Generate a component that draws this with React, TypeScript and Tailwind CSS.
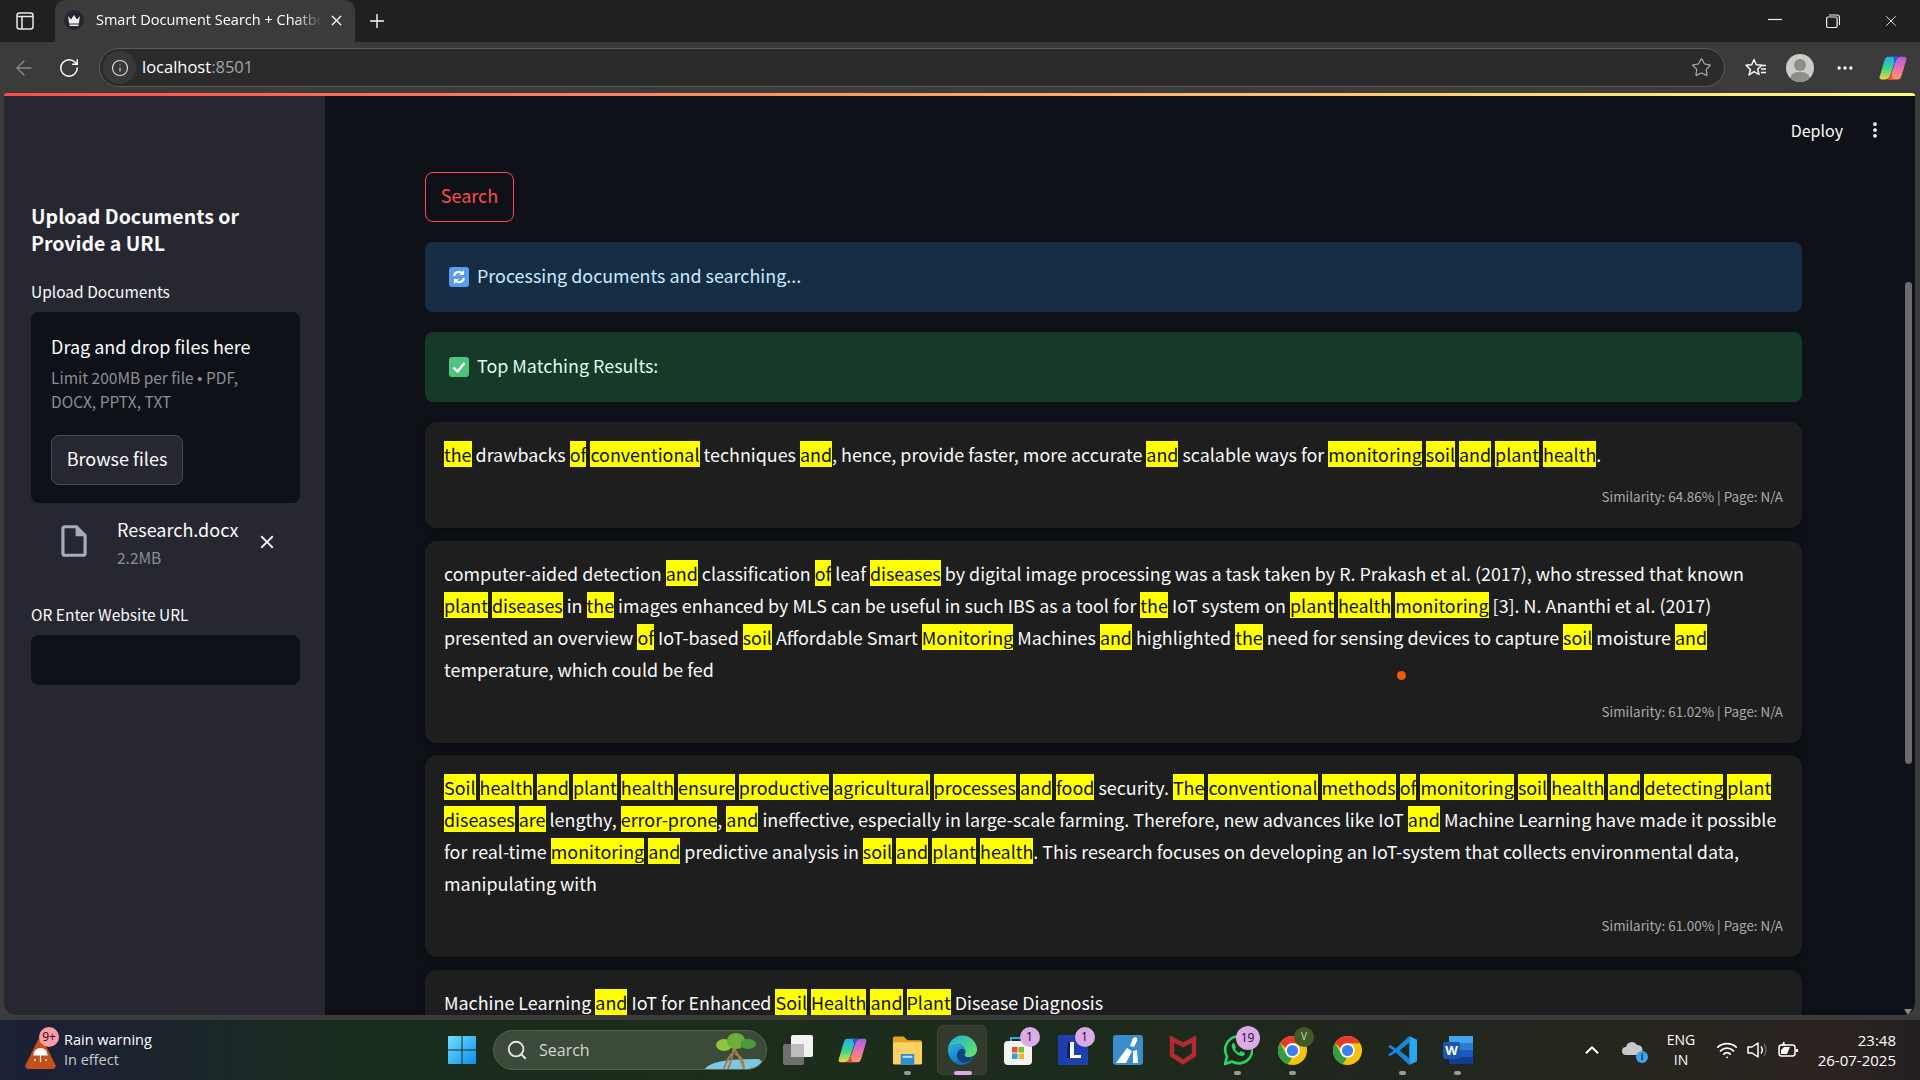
import { ReactNode } from "react";
import {
	ArrowLeft,
	ChevronUp,
	Info,
	MoreHorizontal,
	MoreVertical,
	Plus,
	RotateCw,
	Search,
	Star,
	Wifi,
	X,
} from "lucide-react";
import { MdClose, MdOutlineInsertDriveFile } from "react-icons/md";

const stFont = "font-['Noto_Sans_CJK_SC','Noto_Sans',sans-serif]";
const winFont = "font-['Open_Sans','Noto_Sans',sans-serif]";

// *word* gets the yellow highlight
function Marked({ text }: { text: string }) {
	const parts = text.split(/(\*[^*]+\*)/g);
	return (
		<div className="h-[32px] whitespace-nowrap leading-[32px]">
			{parts.map((p, i) =>
				p.startsWith("*") ? (
					<mark key={i} className="bg-[#ffff00] text-[#111]">
						{p.slice(1, -1)}
					</mark>
				) : (
					<span key={i}>{p}</span>
				),
			)}
		</div>
	);
}

function ResultCard({ lines, meta }: { lines: string[]; meta?: string }) {
	return (
		<div className="min-h-[100px] rounded-xl bg-[#1e1e1e] px-[19px] pt-[16px] pb-[21px] text-[17.9px] text-[#fafafa] shadow-[0_2px_8px_rgba(0,0,0,0.4)]">
			{lines.map((l, i) => (
				<Marked key={i} text={l} />
			))}
			{meta && <div className="mt-[15px] h-[22px] text-right text-[13.4px] leading-[22px] text-[#aaaaaa]">{meta}</div>}
		</div>
	);
}

function Alert({ className, icon, children }: { className: string; icon: ReactNode; children: ReactNode }) {
	return (
		<div className={`flex h-[70px] items-center gap-[8px] rounded-lg pl-[24px] text-[17.9px] ${className}`}>
			{icon}
			<span className="pb-[3px]">{children}</span>
		</div>
	);
}

function Copilot({ size }: { size: number }) {
	return (
		<svg width={size} height={size} viewBox="0 0 32 32">
			<defs>
				<linearGradient id="cpl" x1="0" y1="0" x2="0" y2="1">
					<stop offset="0" stopColor="#25a9f2" />
					<stop offset="0.5" stopColor="#35d68a" />
					<stop offset="1" stopColor="#f4d83a" />
				</linearGradient>
				<linearGradient id="cpr" x1="0" y1="0" x2="0" y2="1">
					<stop offset="0" stopColor="#a45ee5" />
					<stop offset="0.55" stopColor="#ef70b0" />
					<stop offset="1" stopColor="#fb9a5a" />
				</linearGradient>
			</defs>
			<path d="M22 29H10c2-1 3-3 4-6l5-15c1-3 3-5 6-5h4c2 0 3 2 2 4L26 24c-1 3-2 5-4 5z" fill="url(#cpr)" />
			<path d="M10 3h12c-2 1-3 3-4 6l-5 15c-1 3-3 5-6 5H3c-2 0-3-2-2-4L6 8c1-3 2-5 4-5z" fill="url(#cpl)" />
			<path d="M16 3h7c-2 1-3 2-4 5l-1 3c-1-3-1-6-2-8z" fill="#1c5fd8" />
			<path d="M16 29H9c2-1 3-2 4-5l1-3c1 3 1 6 2 8z" fill="#e8503a" />
		</svg>
	);
}

function Edge() {
	return (
		<svg width="31" height="31" viewBox="0 0 32 32">
			<defs>
				<linearGradient id="ed1" x1="0" y1="0" x2="1" y2="0.6">
					<stop offset="0" stopColor="#1fa8e0" />
					<stop offset="1" stopColor="#5be070" />
				</linearGradient>
				<linearGradient id="ed2" x1="0" y1="0" x2="0.8" y2="1">
					<stop offset="0" stopColor="#25b4ea" />
					<stop offset="1" stopColor="#0b5fb0" />
				</linearGradient>
			</defs>
			<path d="M1 16A15 15 0 0 1 31 15c0 5-4 8-8 8-3 0-5-1-5-3 0-1 1-1 1-3 0-4-4-8-9-7-5 0-8 3-9 6z" fill="url(#ed1)" />
			<path d="M1 16c1-3 4-6 9-6 5-1 9 3 9 7 0 2-1 2-1 3 0 2 2 3 5 3 2 0 4-1 5-2-2 6-7 10-13 10C8 31 1 24 1 16z" fill="url(#ed2)" />
			<path d="M15 28c-5-2-6-8-3-12 2-2 5-3 7 1 0 2-1 2-1 3 0 2 2 3 5 3 2 0 4-1 5-2-3 5-8 9-13 7z" fill="#12427a" />
		</svg>
	);
}

function Chrome() {
	return (
		<svg width="31" height="31" viewBox="0 0 32 32">
			<circle cx="16" cy="16" r="15" fill="#f4c20d" />
			<path d="M16 1a15 15 0 0 1 13 7.500H16a7.500 7.500 0 0 0-7 5L3.200 8.300A15 15 0 0 1 16 1z" fill="#e33b2e" />
			<path d="M3.200 8.300 9.600 20a7.500 7.500 0 0 0 6 3.500L11 30.200A15 15 0 0 1 3.200 8.300z" fill="#2f9e44" />
			<circle cx="16" cy="16" r="7.500" fill="#fff" />
			<circle cx="16" cy="16" r="5.800" fill="#3f7fe8" />
		</svg>
	);
}

function Badge({ children, className = "" }: { children: ReactNode; className?: string }) {
	return (
		<span
			className={`absolute top-[-8px] right-[-7px] flex h-[20px] min-w-[20px] items-center justify-center rounded-full bg-[#dcaae6] text-[12px] text-[#111] ${className}`}
		>
			{children}
		</span>
	);
}

function TaskIcon({ children, dot, active }: { children: ReactNode; dot?: boolean; active?: boolean }) {
	return (
		<div className="relative flex h-[60px] w-[55px] items-center justify-center">
			{active && <div className="absolute top-[5px] left-[2px] h-[50px] w-[50px] rounded-md border border-[#3d4436] bg-[#333a2d]" />}
			<div className="relative flex items-center justify-center">{children}</div>
			{dot && (
				<div
					className={`absolute top-[51px] h-[4px] rounded-full ${active ? "w-[18px] bg-[#dcaae6]" : "w-[7px] bg-[#9a9a9a]"}`}
				/>
			)}
		</div>
	);
}

const taskApps: { node: ReactNode; dot?: boolean; active?: boolean }[] = [
	{
		node: (
			<svg width="32" height="32" viewBox="0 0 32 32">
				<rect x="1" y="10" width="21" height="21" rx="2" fill="#6f6f6f" />
				<rect x="9" y="1" width="22" height="22" rx="2" fill="#f2f2f2" />
				<rect x="9" y="10" width="13" height="13" fill="#bdbdbd" />
			</svg>
		),
	},
	{ node: <Copilot size={29} /> },
	{
		node: (
			<svg width="31" height="30" viewBox="0 0 32 30">
				<path d="M1 3a2 2 0 0 1 2-2h9l4 4h13a2 2 0 0 1 2 2v4H1z" fill="#e0a520" />
				<rect x="1" y="7" width="30" height="23" rx="1.500" fill="#fbd262" />
				<rect x="9" y="19" width="14" height="11" rx="1" fill="#2b8fd6" />
				<rect x="11" y="21" width="10" height="2" fill="#bfe3f7" />
			</svg>
		),
		dot: true,
	},
	{ node: <Edge />, dot: true, active: true },
	{
		node: (
			<>
				<svg width="30" height="30" viewBox="0 0 30 30">
					<path d="M8 7V3h13v4" fill="none" stroke="#34a7e0" strokeWidth="2" />
					<rect x="1" y="6" width="28" height="24" rx="4" fill="#f2f2f2" />
					<rect x="9" y="12" width="5.500" height="5.500" fill="#e8512f" />
					<rect x="15.500" y="12" width="5.500" height="5.500" fill="#7db82d" />
					<rect x="9" y="18.500" width="5.500" height="5.500" fill="#2b9fe0" />
					<rect x="15.500" y="18.500" width="5.500" height="5.500" fill="#f6b71a" />
				</svg>
				<Badge>1</Badge>
			</>
		),
	},
	{
		node: (
			<>
				<svg width="30" height="30" viewBox="0 0 30 30">
					<rect width="30" height="30" fill="#1e3fae" />
					<path d="M10 7h2l2 13H22v3H9z" fill="#0d1f55" />
					<path d="M12 7h4v13h7v3H12z" fill="#fff" />
				</svg>
				<Badge>1</Badge>
			</>
		),
	},
	{
		node: (
			<svg width="30" height="30" viewBox="0 0 30 30">
				<rect width="30" height="30" rx="3" fill="#3a8ccb" />
				<path d="M3 28 14 13l5 3-6 12zM17 11l3-8c3-2 5 0 4 3l-3 6zM20 16l4-1 1 13h-5z" fill="#fff" />
			</svg>
		),
	},
	{
		node: (
			<svg width="28" height="32" viewBox="0 0 28 32">
				<path d="M3 5l11 6 11-6v16l-11 7-11-7z" fill="none" stroke="#b52a2e" strokeWidth="4.500" />
			</svg>
		),
	},
	{
		node: (
			<>
				<svg width="30" height="32" viewBox="0 0 30 32">
					<path d="M2 30l2-7.500A13.500 13.500 0 1 1 9 27.500z" fill="none" stroke="#2bd366" strokeWidth="2.600" strokeLinejoin="round" />
					<path d="M10 9c-1 1-2 3-1 5 2 4 5 7 9 8 2 1 4-1 4-3l-4-2-2 2c-2-1-3-3-4-4l1-2-2-4z" fill="#2bd366" />
				</svg>
				<Badge className="right-[-6px] h-[24px] w-[24px]">19</Badge>
			</>
		),
		dot: true,
	},
	{
		node: (
			<>
				<Chrome />
				<span className="absolute top-[-8px] right-[-6px] flex h-[20px] w-[20px] items-center justify-center rounded-full bg-[#3f5a26] text-[10px] text-[#cde0b0]">
					V
				</span>
			</>
		),
		dot: true,
	},
	{ node: <Chrome /> },
	{
		node: (
			<svg width="31" height="31" viewBox="0 0 32 32">
				<path d="M23 1 9 14 3 10l-2 2 6 4-6 4 2 2 6-4 14 13v-7L13 16 23 8z" fill="#1a86d8" />
				<path d="M23 1l8 4v22l-8 4z" fill="#2aa6f0" />
			</svg>
		),
		dot: true,
	},
	{
		node: (
			<svg width="30" height="30" viewBox="0 0 30 30">
				<rect x="6" y="1" width="24" height="28" rx="2" fill="#2b7cd3" />
				<rect x="6" y="1" width="24" height="7" fill="#41a5ee" />
				<rect x="6" y="15" width="24" height="7" fill="#185abd" />
				<rect x="6" y="22" width="24" height="7" fill="#103f91" />
				<rect x="0" y="7" width="17" height="17" rx="2" fill="#1a56b0" />
				<text x="8.500" y="20" textAnchor="middle" fontSize="13" fontWeight="700" fill="#fff" fontFamily="Open Sans">
					W
				</text>
			</svg>
		),
		dot: true,
	},
];

function Taskbar() {
	return (
		<div
			className={`flex h-[60px] shrink-0 items-center bg-[linear-gradient(90deg,#1b2136_0%,#1c2232_5%,#1a2c1e_18%,#1c2d1a_40%,#1d2a1c_60%,#20261e_72%,#26261e_85%,#2c2320_95%,#232021_100%)] text-white ${winFont}`}
		>
			<div className="relative ml-[25px] flex h-[40px] w-[422px] items-center">
				<svg width="31" height="33" viewBox="0 0 31 33" className="mt-[6px]">
					<path d="M13 3a3 3 0 0 1 5 0l12 24a3 3 0 0 1-2 5H3a3 3 0 0 1-2-5z" fill="#c4511a" />
					<path d="M9 18a6.500 6.500 0 0 1 13 0zM15.500 18v7M10 22v2M21 22v2" fill="#fff" stroke="#fff" strokeWidth="1.200" />
				</svg>
				<span className="absolute top-[-3px] left-[14px] flex h-[20px] w-[20px] items-center justify-center rounded-full bg-[#ff9aa8] text-[12px] text-[#111]">
					9+
				</span>
				<div className="ml-[8px] text-[14.500px] leading-[20px]">
					<div>Rain warning</div>
					<div className="text-[#c9cdc6]">In effect</div>
				</div>
			</div>
			<svg width="30" height="30" viewBox="0 0 30 30">
				<defs>
					<linearGradient id="win" x1="0" y1="0" x2="1" y2="1">
						<stop offset="0" stopColor="#6fe0fb" />
						<stop offset="1" stopColor="#0f8cf0" />
					</linearGradient>
				</defs>
				<path d="M1 2a1 1 0 0 1 1-1h12.500v13.500H1zM15.500 1H28a1 1 0 0 1 1 1v12.500H15.500zM1 15.500h13.500V29H2a1 1 0 0 1-1-1zM15.500 15.500H29V28a1 1 0 0 1-1 1H15.500z" fill="url(#win)" />
			</svg>
			<div className="relative ml-[16px] flex h-[40px] w-[274px] items-center overflow-hidden rounded-full border border-[#566552] bg-[#3b4a39]">
				<Search size={22} className="ml-[12px] text-[#e6e6e6]" strokeWidth={2} />
				<span className="ml-[11px] text-[16px] text-[#d5d8d2]">Search</span>
				<svg width="60" height="38" viewBox="0 0 60 38" className="absolute top-[1px] right-[2px]">
					<path d="M0 38c5-8 20-11 55-11l3 3-6 8z" fill="#7fc7e0" />
					<path d="M30 14c-1 8-2 14-6 23M30 16c3 6 8 12 10 21M30 20c-4 3-8 10-10 17M31 22c5 1 9 7 9 15" fill="none" stroke="#a57c52" strokeWidth="2" />
					<ellipse cx="20" cy="13" rx="8" ry="6" fill="#8cc63f" />
					<ellipse cx="32" cy="9" rx="9" ry="8" fill="#6dae3a" />
					<ellipse cx="44" cy="12" rx="8" ry="5" fill="#4a9a3c" />
				</svg>
			</div>
			<div className="ml-[3px] flex">
				{taskApps.map((a, i) => (
					<TaskIcon key={i} dot={a.dot} active={a.active}>
						{a.node}
					</TaskIcon>
				))}
			</div>
			<ChevronUp size={22} className="ml-[96px] text-white" strokeWidth={2.200} />
			<div className="relative ml-[18px] h-[20px] w-[24px]">
				<svg width="24" height="20" viewBox="0 0 24 20">
					<path d="M5 15a4 4 0 0 1 0-8 6 6 0 0 1 11-2 5 5 0 0 1 1 10z" fill="#c8c8c8" />
				</svg>
				<div className="absolute right-[-3px] bottom-[-3px] flex h-[12px] w-[12px] items-center justify-center rounded-full bg-[#39a6ef] text-[9px] font-bold text-[#10202c]">
					i
				</div>
			</div>
			<div className="ml-[18px] w-[36px] text-center text-[14px] leading-[20px]">
				<div>ENG</div>
				<div>IN</div>
			</div>
			<Wifi size={22} className="ml-[17px]" strokeWidth={2} />
			<svg width="22" height="20" viewBox="0 0 22 20" className="ml-[8px]" fill="none" stroke="#fff" strokeWidth="1.500">
				<path d="M2 7h4l6-4v14l-6-4H2z" strokeLinejoin="round" />
				<path d="M15 6.500c1.500 2 1.500 5 0 7" />
				<path d="M18 4c2.500 3.500 2.500 8.500 0 12" stroke="#666" />
			</svg>
			<svg width="22" height="18" viewBox="0 0 22 18" className="ml-[9px]" fill="none" stroke="#fff" strokeWidth="1.500">
				<rect x="2" y="4" width="16" height="11" rx="2.500" />
				<path d="M20 8v3" strokeWidth="2" />
				<path d="M4 13V9l3-3h6l-3 7z" fill="#fff" stroke="none" />
				<path d="M5 5l2-4v3h2" strokeWidth="1.200" />
			</svg>
			<div className="ml-[15px] w-[82px] text-right text-[15px] leading-[20px]">
				<div>23:48</div>
				<div className="whitespace-nowrap">26-07-2025</div>
			</div>
		</div>
	);
}

function BrowserChrome() {
	return (
		<>
			<div className="flex h-[42px] shrink-0 items-end bg-[#202020] text-white">
				<div className="flex h-[42px] w-[55px] items-center pl-[16px]">
					<svg width="18" height="18" viewBox="0 0 18 18" fill="none" stroke="#e8e8e8" strokeWidth="1.500">
						<rect x="1" y="1" width="16" height="16" rx="2.500" />
						<path d="M1 4.500h16M6 4.500V17" />
					</svg>
				</div>
				<div className="flex h-[42px] w-[300px] items-center rounded-t-[10px] bg-[#3b3b3b] pb-[2px] pl-[9px]">
					<div className="flex h-[20px] w-[20px] items-center justify-center rounded-full bg-[#262730]">
						<svg width="14" height="11" viewBox="0 0 14 11">
							<path d="M1 1l3 3.500L7 0l3 4.500L13 1l-1.200 7.500H2.200zM2.500 9.500h9V11h-9z" fill="#f0f0f0" />
						</svg>
					</div>
					<div className={`ml-[12px] w-[226px] overflow-hidden text-[14.500px] whitespace-nowrap ${winFont} [mask-image:linear-gradient(90deg,#000_88%,transparent_100%)]`}>
						Smart Document Search + Chatbot
					</div>
					<X size={17} className="ml-[6px] shrink-0" strokeWidth={1.800} />
				</div>
				<div className="flex h-[42px] w-[44px] items-center justify-center">
					<Plus size={22} strokeWidth={1.500} />
				</div>
				<div className="flex-1" />
				<div className="flex h-[42px] items-center">
					<svg width="14" height="14" viewBox="0 0 14 14" className="mr-[44px]" stroke="#eee" strokeWidth="1.200">
						<path d="M0 5.500h14" />
					</svg>
					<svg width="14" height="14" viewBox="0 0 14 14" className="mr-[42px]" fill="none" stroke="#eee" strokeWidth="1.200">
						<rect x="0.600" y="3" width="10.500" height="10.500" rx="1.500" />
						<path d="M3 1h8a2.500 2.500 0 0 1 2.500 2.500V11" />
					</svg>
					<X size={18} strokeWidth={1.200} className="mr-[20px] text-[#eee]" />
				</div>
			</div>
			<div className="flex h-[51px] shrink-0 items-center bg-[#3b3b3b] text-white">
				<ArrowLeft size={24} strokeWidth={1.300} className="ml-[12px] text-[#8a8a8a]" />
				<RotateCw size={22} strokeWidth={1.600} className="ml-[22px]" />
				<div className="ml-[19px] flex h-[39px] w-[1626px] items-center rounded-full border border-[#5b5b5b] bg-[#2b2b2b]">
					<div className="ml-[3px] flex h-[33px] w-[33px] items-center justify-center rounded-full bg-[#383838]">
						<Info size={18} strokeWidth={1.500} className="text-[#dcdcdc]" />
					</div>
					<span className={`ml-[6px] text-[16.500px] ${winFont}`}>
						localhost<span className="text-[#a6a6a6]">:8501</span>
					</span>
					<div className="flex-1" />
					<Star size={21} strokeWidth={1.400} className="mr-[12px] text-[#a8a8a8]" />
				</div>
				<svg width="22" height="20" viewBox="0 0 22 20" className="ml-[20px]" fill="none" stroke="#fff" strokeWidth="1.400">
					<path d="M9 1.500l2.300 5.200 5.700.5-4.300 3.800 1.300 5.500L9 13.600l-5 3.400 1.400-5.500L1 7.200l5.700-.5z" strokeLinejoin="round" />
					<path d="M15 7.500h6M16 11h5M16 14.500h5" />
				</svg>
				<div className="relative ml-[19px] h-[28px] w-[28px] overflow-hidden rounded-full bg-[#cdcbc7]">
					<div className="absolute top-[5px] left-[8px] h-[12px] w-[12px] rounded-full bg-[#8f8d89]" />
					<div className="absolute top-[18px] left-[4px] h-[16px] w-[20px] rounded-full bg-[#8f8d89]" />
				</div>
				<MoreHorizontal size={20} className="ml-[21px]" strokeWidth={2} />
				<div className="ml-[24px]">
					<Copilot size={28} />
				</div>
			</div>
		</>
	);
}

function Sidebar() {
	return (
		<aside className="w-[321px] shrink-0 rounded-bl-xl bg-[#262730] px-[27px] pt-[106px] text-[#fafafa]">
			<h2 className="text-[19.500px] leading-[27px] font-semibold">
				Upload Documents or
				<br />
				Provide a URL
			</h2>
			<div className="mt-[23px] h-[24px] text-[15.500px] leading-[24px]">Upload Documents</div>
			<div className="mt-[9px] h-[191px] w-[269px] rounded-lg bg-[#0e1117] px-[20px] pt-[18px]">
				<div className="text-[18px] leading-[32px]">Drag and drop files here</div>
				<div className="mt-[4px] text-[15.500px] leading-[22px] text-[#8c8e95]">
					Limit 200MB per file <span className="font-['Liberation_Sans',sans-serif]">•</span> PDF,
					<br />
					DOCX, PPTX, TXT
				</div>
				<button className="mt-[23px] h-[50px] w-[132px] rounded-lg border border-[#4a4b55] bg-[#262730] pb-[3px] text-[18px]">Browse files</button>
			</div>
			<div className="mt-[12px] flex h-[60px] w-[269px]">
				<MdOutlineInsertDriveFile size={38} className="mt-[7px] ml-[24px] text-[#a8abbb]" />
				<div className="ml-[24px] w-[132px]">
					<div className="text-[18px] leading-[28px]">Research.docx</div>
					<div className="text-[15.500px] leading-[28px] text-[#8c8e95]">2.2MB</div>
				</div>
				<MdClose size={22} className="mt-[16px] ml-[7px]" />
			</div>
			<div className="mt-[27px] h-[24px] text-[15.500px] leading-[24px]">OR Enter Website URL</div>
			<div className="mt-[9px] h-[50px] w-[269px] rounded-lg bg-[#0e1117]" />
		</aside>
	);
}

export default function App() {
	return (
		<div className={`flex h-screen w-screen flex-col overflow-hidden bg-[#3b3b3b] ${stFont}`}>
			<BrowserChrome />
			<div className="flex min-h-0 flex-1 flex-col pr-[5px] pb-[5px] pl-[4px]">
				<div className="h-[3px] shrink-0 rounded-t-lg bg-[linear-gradient(90deg,#ff4b4b,#fffd80)]" />
				<div className="flex min-h-0 flex-1 overflow-hidden rounded-b-xl">
					<Sidebar />
					<main className="relative min-w-0 flex-1 overflow-hidden bg-[#0e1117] pr-[113px] pl-[100px]">
						<div className="absolute top-[22px] right-[30px] left-0 flex items-center justify-end text-[16px] text-[#fafafa]">
							<span>Deploy</span>
							<MoreVertical size={20} strokeWidth={2.500} className="ml-[22px]" />
						</div>
						<button className="mt-[76px] h-[50px] w-[89px] rounded-lg border border-[#ff4b4b] pb-[3px] text-[18px] text-[#ff4b4b]">Search</button>
						<div className="mt-[20px] flex flex-col gap-[20px]">
							<Alert
								className="bg-[#172d43] text-[#c7ebff]"
								icon={
									<svg width="20" height="20" viewBox="0 0 20 20">
										<rect width="20" height="20" rx="3" fill="#5a9df0" />
										<path d="M5 9a5 5 0 0 1 9-2M15 11a5 5 0 0 1-9 2" fill="none" stroke="#fff" strokeWidth="2" />
										<path d="M15 3v5h-5zM5 17v-5h5z" fill="#fff" />
									</svg>
								}
							>
								Processing documents and searching...
							</Alert>
							<Alert
								className="bg-[#173928] text-[#dffde9]"
								icon={
									<svg width="20" height="20" viewBox="0 0 20 20">
										<rect width="20" height="20" rx="3" fill="#4fc47f" />
										<path d="M4.500 10.500l4 4 7-8.500" fill="none" stroke="#fff" strokeWidth="2.400" />
									</svg>
								}
							>
								Top Matching Results:
							</Alert>
						</div>
						<div className="mt-[20px] flex flex-col gap-[12.500px]">
							<ResultCard
								lines={[
									"*the* drawbacks *of* *conventional* techniques *and*, hence, provide faster, more accurate *and* scalable ways for *monitoring* *soil* *and* *plant* *health*.",
								]}
								meta="Similarity: 64.86% | Page: N/A"
							/>
							<ResultCard
								lines={[
									"computer-aided detection *and* classification *of* leaf *diseases* by digital image processing was a task taken by R. Prakash et al. (2017), who stressed that known",
									"*plant* *diseases* in *the* images enhanced by MLS can be useful in such IBS as a tool for *the* IoT system on *plant* *health* *monitoring* [3]. N. Ananthi et al. (2017)",
									"presented an overview *of* IoT-based *soil* Affordable Smart *Monitoring* Machines *and* highlighted *the* need for sensing devices to capture *soil* moisture *and*",
									"temperature, which could be fed",
								]}
								meta="Similarity: 61.02% | Page: N/A"
							/>
							<ResultCard
								lines={[
									"*Soil* *health* *and* *plant* *health* *ensure* *productive* *agricultural* *processes* *and* *food* security. *The* *conventional* *methods* *of* *monitoring* *soil* *health* *and* *detecting* *plant*",
									"*diseases* *are* lengthy, *error-prone*, *and* ineffective, especially in large-scale farming. Therefore, new advances like IoT *and* Machine Learning have made it possible",
									"for real-time *monitoring* *and* predictive analysis in *soil* *and* *plant* *health*. This research focuses on developing an IoT-system that collects environmental data,",
									"manipulating with",
								]}
								meta="Similarity: 61.00% | Page: N/A"
							/>
							<ResultCard lines={["Machine Learning *and* IoT for Enhanced *Soil* *Health* *and* *Plant* Disease Diagnosis"]} />
						</div>
						{/* laser pointer dot and scrollbar sit over the page */}
						<div className="absolute top-[575px] left-[1072px] h-[9px] w-[9px] rounded-full bg-[#f25a0c]" />
						<div className="absolute top-[186px] right-[3px] h-[482px] w-[7px] rounded-full bg-[#6b6c70]" />
						<div className="absolute right-[3px] bottom-[0px] h-0 w-0 border-x-[4px] border-t-[6px] border-x-transparent border-t-[#8a8a8a]" />
					</main>
				</div>
			</div>
			<Taskbar />
		</div>
	);
}
